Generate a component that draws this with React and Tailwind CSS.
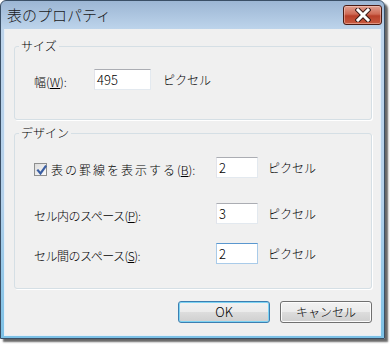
import React from "react";

const jp = "font-['Noto_Sans_CJK_JP','Liberation_Sans',sans-serif]";

function TextBox({ value, width, focused }) {
  return (
    <div
      className={`h-[21px] ${width} border bg-white pl-[2px] text-[13px] leading-[19px] text-black ${
        focused
          ? "border-[#a9cbe9] border-t-[#5a97cf]"
          : "border-[#e3e9ef] border-t-[#abadb3] border-l-[#e2e3ea]"
      }`}
    >
      {value}
    </div>
  );
}

function CheckBox() {
  return (
    <div className="mt-[6px] h-[13px] w-[13px] shrink-0 border border-[#8e8f8f] bg-[linear-gradient(135deg,#dcdcdc,#fbfbfb)] p-[1px]">
      <svg width="11" height="11" viewBox="0 0 11 11">
        <path
          d="M2 5.5 L4.5 8.5 L9.5 1.5"
          fill="none"
          stroke="#3b5fa3"
          strokeWidth="2.2"
          strokeLinecap="square"
        />
      </svg>
    </div>
  );
}

function Unit() {
  return <span className="pt-[2px] leading-[21px]">ピクセル</span>;
}

function Group({ title, height, children }) {
  return (
    <fieldset
      className={`w-[358px] ${height} rounded-[3px] border border-[#d5dfe5] shadow-[1px_1px_0_#ffffff] p-0`}
    >
      <legend className="ml-[4px] px-[2px] text-[12px] leading-[16px]">{title}</legend>
      {children}
    </fieldset>
  );
}

export default function App() {
  return (
    <div className={`h-[344px] w-[391px] bg-white ${jp} text-[12px] font-light text-black`}>
      <div className="flex h-[339px] w-[385px] flex-col rounded-t-[6px] border border-[#3a4f66] bg-[linear-gradient(to_bottom,#9cb6d4,#bdd4eb_28px,#b3d0ea_200px,#7cc1e6)] px-[3px] pb-[2px] shadow-[3px_3px_2px_rgba(0,0,0,0.6)]">
        <div className="flex h-[28px] items-start justify-between pl-[3px]">
          <span className="pt-[4px] text-[15px] leading-[20px] text-[#1a1a1a]">表のプロパティ</span>
          <div className="mr-[-1px] mt-[4px] flex h-[20px] w-[39px] items-center justify-center rounded-[3px] border border-[#4a1c14] bg-[linear-gradient(to_bottom,#e0a090,#cf6a55_45%,#b8402a_55%,#c85a40)] shadow-[inset_0_0_0_1px_rgba(255,220,210,0.45)]">
            <svg width="16" height="14" viewBox="0 0 16 14">
              <path
                d="M3 2 L13 12 M13 2 L3 12"
                stroke="#3a1a16"
                strokeWidth="5"
                strokeLinecap="square"
              />
              <path
                d="M3 2 L13 12 M13 2 L3 12"
                stroke="#ffffff"
                strokeWidth="3"
                strokeLinecap="square"
              />
            </svg>
          </div>
        </div>
        <div className="flex flex-1 flex-col border border-t-0 border-[#e6eef7] bg-[#f0f0f0] px-[9px] pt-[9px]">
          <Group title="サイズ" height="h-[82px]">
            <div className="flex items-start pl-[19px] pt-[15px]">
              <span className="w-[60px] pt-[2px] leading-[21px]">
                幅(<span className="underline">W</span>):
              </span>
              <TextBox value="495" width="w-[57px]" />
              <span className="ml-[12px]">
                <Unit />
              </span>
            </div>
          </Group>
          <div className="mt-[5px]">
            <Group title="デザイン" height="h-[164px]">
              <div className="flex flex-col pl-[19px] pt-[16px]">
                <div className="flex items-start">
                  <div className="flex w-[182px] items-start gap-[4px]">
                    <CheckBox />
                    <span className="pt-[2px] leading-[21px]">
                      <span className="tracking-[2px]">表の罫線を表示する</span>(
                      <span className="underline">B</span>):
                    </span>
                  </div>
                  <TextBox value="2" width="w-[42px]" />
                  <span className="ml-[10px]">
                    <Unit />
                  </span>
                </div>
                <div className="mt-[23px] flex items-start">
                  <span className="w-[182px] pt-[2px] leading-[21px] tracking-[-0.5px]">
                    セル内のスペース(<span className="underline">P</span>):
                  </span>
                  <TextBox value="3" width="w-[42px]" />
                  <span className="ml-[10px]">
                    <Unit />
                  </span>
                </div>
                <div className="mt-[17px] flex items-start">
                  <span className="w-[182px] pt-[2px] leading-[21px] tracking-[-0.5px]">
                    セル間のスペース(<span className="underline">S</span>):
                  </span>
                  <TextBox value="2" width="w-[42px]" focused />
                  <span className="ml-[10px]">
                    <Unit />
                  </span>
                </div>
              </div>
            </Group>
          </div>
          <div className="mt-[12px] flex w-[358px] justify-end gap-[10px]">
            <button className="h-[22px] w-[92px] rounded-[3px] border border-[#3c7fb1] bg-[linear-gradient(to_bottom,#f2f2f2_0%,#ebebeb_50%,#dddddd_50%,#cfcfcf_100%)] text-[13px] leading-[20px] shadow-[inset_0_0_0_1px_#7ed3f3]">
              OK
            </button>
            <button className="h-[22px] w-[92px] rounded-[3px] border border-[#707070] bg-[linear-gradient(to_bottom,#f2f2f2_0%,#ebebeb_50%,#dddddd_50%,#cfcfcf_100%)] text-[12px] leading-[20px] shadow-[inset_0_0_0_1px_#fcfcfc]">
              キャンセル
            </button>
          </div>
        </div>
      </div>
    </div>
  );
}
